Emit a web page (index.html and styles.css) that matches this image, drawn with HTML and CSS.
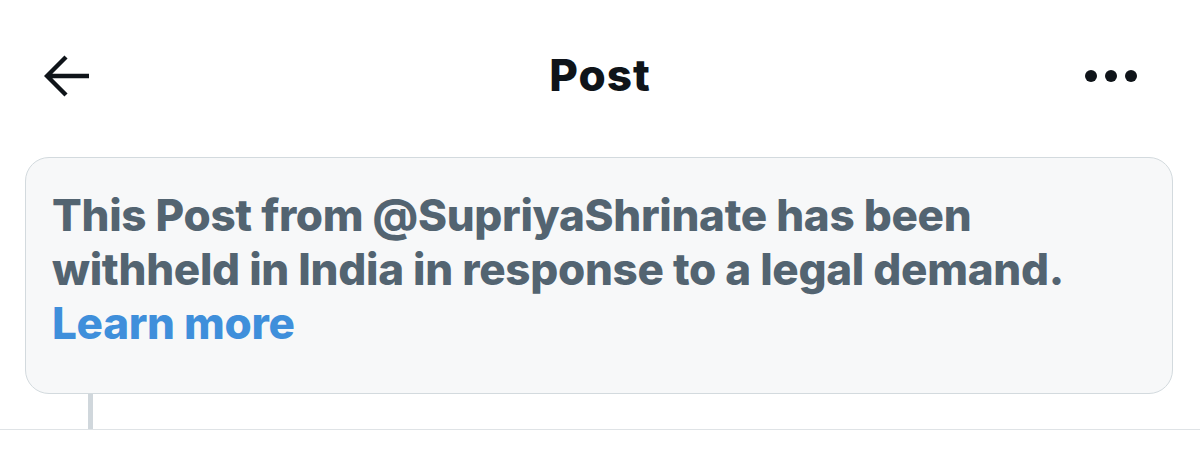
FILE: index.html
```html
<!DOCTYPE html>
<html lang="en">
<head>
<meta charset="utf-8">
<title>Post</title>
<link rel="stylesheet" href="styles.css">
</head>
<body>
<div class="page">
  <header class="topbar">
    <div class="side left">
      <button class="icon-btn back" aria-label="Back">
        <svg width="46" height="42" viewBox="0 0 46 42"><path d="M45 21H3M22 2L3 21l19 19" fill="none" stroke="#0f1419" stroke-width="4.4"/></svg>
      </button>
    </div>
    <h1 class="title">Post</h1>
    <div class="side right">
      <button class="icon-btn more" aria-label="More">
        <span class="dot"></span><span class="dot"></span><span class="dot"></span>
      </button>
    </div>
  </header>
  <section class="notice">
    <p class="notice-text">This Post from @SupriyaShrinate has been withheld in India in response to a legal demand. <a class="learn" href="#">Learn more</a></p>
  </section>
  <div class="thread">
    <span class="thread-line"></span>
  </div>
</div>
</body>
</html>
```
FILE: styles.css
```css
* { box-sizing: border-box; }
html, body { margin: 0; padding: 0; background: #ffffff; }
body { font-family: Inter, "Noto Sans", sans-serif; color: #0f1419; }
.page { width: 1200px; height: 457px; overflow: hidden; }
.topbar {
  height: 150px;
  display: grid;
  grid-template-columns: 1fr auto 1fr;
  align-items: center;
  padding: 0 0 0 0;
}
.side { display: flex; align-items: center; }
.side.left { padding-left: 44px; }
.side.right { justify-content: flex-end; padding-right: 63px; }
.icon-btn {
  background: none;
  border: 0;
  padding: 0;
  display: flex;
  align-items: center;
  cursor: pointer;
}
.back { width: 46px; height: 42px; margin-top: 1px; }
.more { gap: 8px; margin-top: 2px; }
.title {
  margin: 0;
  font-size: 44px;
  line-height: 54px;
  font-weight: 800;
  letter-spacing: 1px;
  color: #0f1419;
  margin-top: 0;
}
.dot { width: 12px; height: 12px; border-radius: 50%; background: #0f1419; display: block; }
.notice {
  margin: 7px 27px 0 25px;
  height: 237px;
  background: #f7f8f9;
  border: 1.5px solid #d3dade;
  border-radius: 24px;
  padding: 30px 26px 0;
}
.notice-text {
  margin: 0;
  font-size: 44px;
  line-height: 54px;
  font-weight: 800;
  letter-spacing: -0.3px;
  color: #536471;
  max-width: 1040px;
}
.learn { color: #3f8fdb; text-decoration: none; display: block; }
.thread {
  height: 36px;
  border-bottom: 1.5px solid #dfe3e6;
  padding-left: 88px;
}
.thread-line { display: block; width: 5px; height: 100%; background: #d0d7dc; }
```
